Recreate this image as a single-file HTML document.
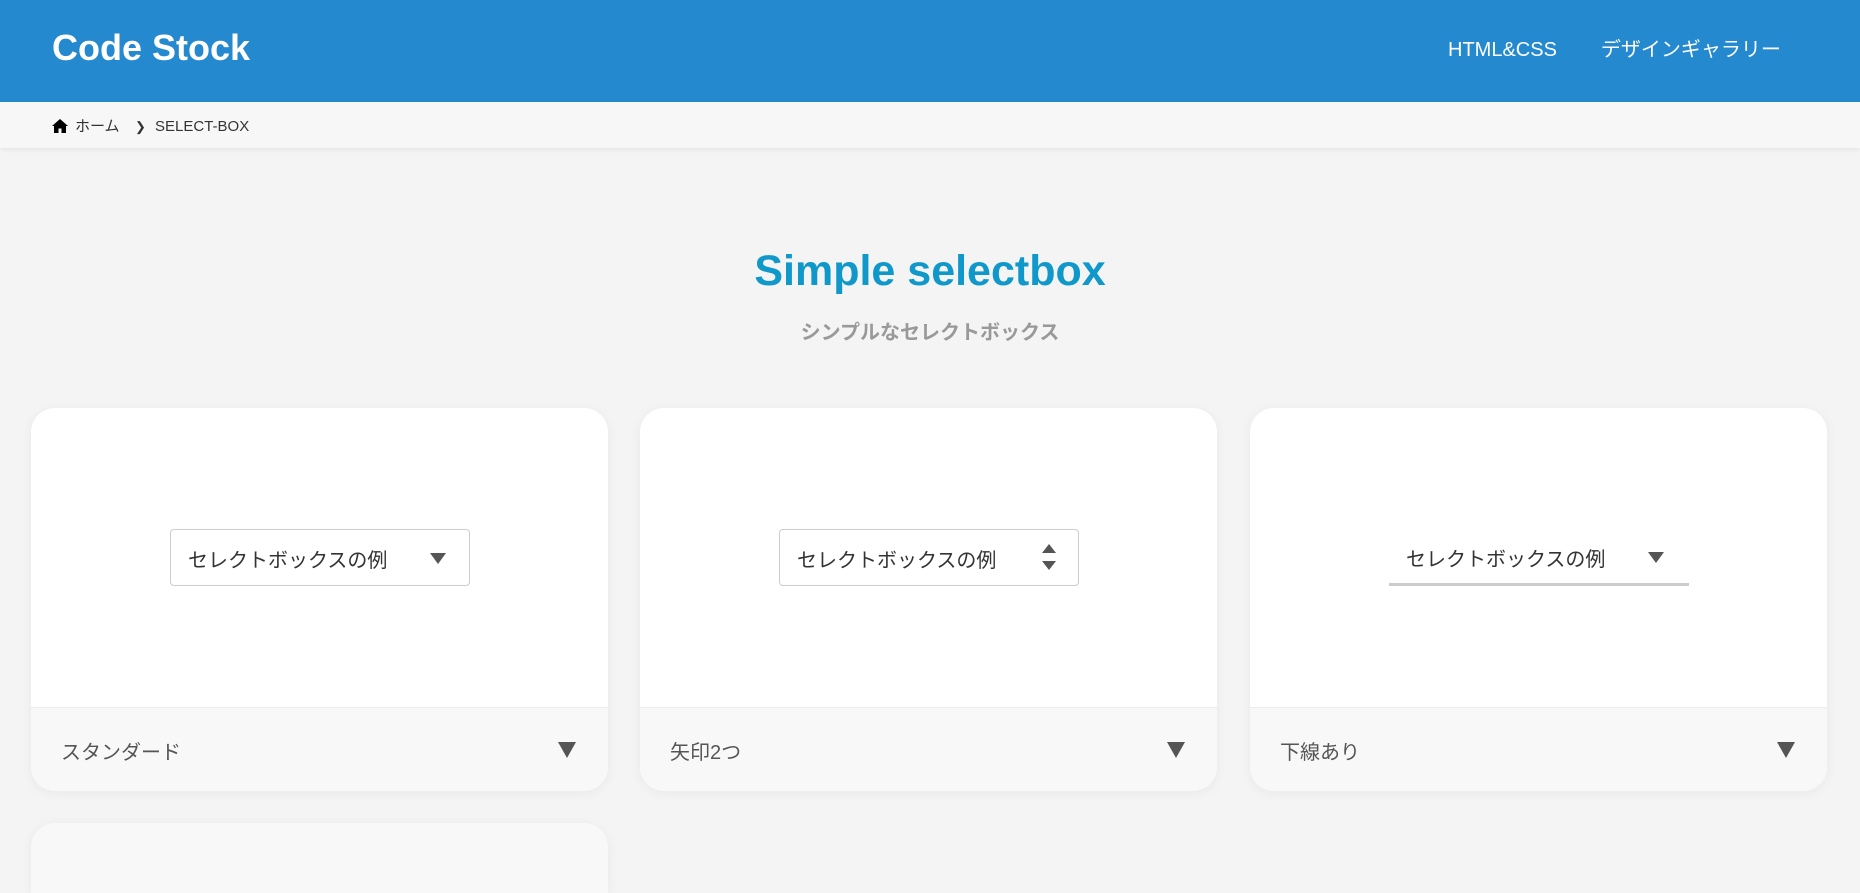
<!DOCTYPE html>
<html style="overflow:hidden;height:893px"><head><meta charset="utf-8"><style>
*{box-sizing:border-box;margin:0;padding:0}
body{width:1860px;height:893px;overflow:hidden;background:#f4f4f4;font-family:"Liberation Sans","Noto Sans CJK JP",sans-serif;position:relative}
.hdr{position:absolute;left:0;top:0;width:1860px;height:102px;background:#2589d0;color:#fff}
.logo{position:absolute;left:52px;top:27px;font-size:36px;font-weight:bold}
.navw{position:absolute;top:36px;left:1448px;display:flex;align-items:center;height:28px;font-size:20px;line-height:28px}
.bc{position:absolute;left:0;top:102px;width:1860px;height:46px;background:#f7f7f7;box-shadow:0 2px 4px rgba(0,0,0,.06);font-size:15px;color:#333}
.bc .x{position:absolute;top:15px;line-height:20px}
h1{position:absolute;left:0;width:1860px;top:247px;text-align:center;font-size:43px;color:#0f98c9;font-weight:bold}
.sub{position:absolute;left:0;width:1860px;top:316px;text-align:center;font-size:20px;color:#999;font-weight:bold}
.card{position:absolute;top:408px;width:577px;height:383px;background:#fff;border-radius:24px;box-shadow:0 2px 12px rgba(0,0,0,.05);overflow:hidden}
.foot{position:absolute;left:0;bottom:0;width:100%;height:84px;background:#f8f8f8;border-top:1px solid #ececec;font-size:20px;color:#555}
.foot .t{position:absolute;left:30px;top:28px}
.sel{position:absolute;left:139px;top:121px;width:300px;height:57px;border:1px solid #ccc;border-radius:4px;font-size:20px;color:#333}
.sel .t{position:absolute;left:17px;top:14px}
.tri{position:absolute;width:0;height:0;border-left:8px solid transparent;border-right:8px solid transparent;border-top:11px solid #555}
.up{position:absolute;width:0;height:0;border-left:7px solid transparent;border-right:7px solid transparent;border-bottom:9px solid #555}
</style></head><body>
<div class="hdr"><div class="logo">Code Stock</div>
<div class="navw"><span>HTML&amp;CSS</span><span style="margin-left:44px">デザインギャラリー</span></div></div>
<div class="bc">
<svg style="position:absolute;left:52px;top:17px" width="16" height="14" viewBox="0 0 16 14"><path d="M8 0L0 7h2v7h4.5V9.5h3V14H14V7h2z" fill="#000"/></svg>
<span class="x" style="left:75px">ホーム</span><span class="x" style="left:135px;font-size:13px">❯</span><span class="x" style="left:155px">SELECT-BOX</span></div>
<h1>Simple selectbox</h1>
<div class="sub">シンプルなセレクトボックス</div>

<div class="card" style="left:31px">
<div class="sel"><span class="t">セレクトボックスの例</span><div class="tri" style="left:259px;top:23px"></div></div>
<div class="foot"><span class="t">スタンダード</span><div class="tri" style="right:32px;left:auto;top:34px;border-left-width:9px;border-right-width:9px;border-top-width:16px"></div></div></div>

<div class="card" style="left:640px">
<div class="sel"><span class="t">セレクトボックスの例</span><div class="up" style="left:262px;top:14px"></div><div class="tri" style="left:262px;top:31px;border-left-width:7px;border-right-width:7px;border-top-width:9px"></div></div>
<div class="foot"><span class="t">矢印2つ</span><div class="tri" style="right:32px;left:auto;top:34px;border-left-width:9px;border-right-width:9px;border-top-width:16px"></div></div></div>

<div class="card" style="left:1250px">
<div class="sel" style="border:none;border-bottom:3px solid #ccc;border-radius:0"><span class="t">セレクトボックスの例</span><div class="tri" style="left:259px;top:23px"></div></div>
<div class="foot"><span class="t">下線あり</span><div class="tri" style="right:32px;left:auto;top:34px;border-left-width:9px;border-right-width:9px;border-top-width:16px"></div></div></div>

<div class="card" style="left:31px;top:823px;height:70px;border-radius:24px 24px 0 0;background:#f8f8f8"></div>
</body></html>
